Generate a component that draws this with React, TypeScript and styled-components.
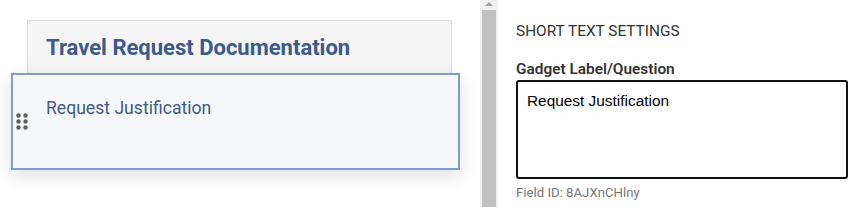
import React, { FC } from "react";
import styled, { createGlobalStyle } from "styled-components";

const GlobalStyle = createGlobalStyle`
  html, body {
    margin: 0;
    padding: 0;
    background: #ffffff;
    font-family: Roboto, "Liberation Sans", sans-serif;
  }
`;

const DragHandle: FC = () => (
  <HandleSvg width="12" height="18" viewBox="0 0 12 18">
    {[0, 1, 2].map((row) =>
      [0, 1].map((col) => (
        <circle key={`${row}-${col}`} cx={2.5 + col * 7} cy={2.5 + row * 6} r={2.2} fill="#5f5f5f" />
      ))
    )}
  </HandleSvg>
);

const App: FC = () => {
  return (
    <>
      <GlobalStyle />
      <Root>
        <Canvas>
          <SectionCard>
            <SectionTitle>Travel Request Documentation</SectionTitle>
          </SectionCard>
          <DraggedGadget>
            <DragHandle />
            <GadgetLabel>Request Justification</GadgetLabel>
          </DraggedGadget>
        </Canvas>
        <Scrollbar>
          <ScrollArrow />
          <ScrollThumb />
        </Scrollbar>
        <Settings>
          <SettingsHeading>SHORT TEXT SETTINGS</SettingsHeading>
          <FieldLabel>Gadget Label/Question</FieldLabel>
          <LabelInput defaultValue="Request Justification" />
          <FieldId>Field ID: 8AJXnCHlny</FieldId>
        </Settings>
      </Root>
    </>
  );
};

export default App;

const Root = styled.div`
  display: flex;
  width: 858px;
  height: 207px;
  overflow: hidden;
`;
const Canvas = styled.div`
  position: relative;
  width: 480px;
  flex-shrink: 0;
  padding: 20px 28px 0 27px;
  box-sizing: border-box;
`;
const SectionCard = styled.div`
  height: 53px;
  box-sizing: border-box;
  border: 1px solid #dcdcdc;
  border-bottom: none;
  background: #f5f5f5;
  padding: 14px 0 0 18px;
`;
const SectionTitle = styled.h2`
  margin: 0;
  font-size: 22px;
  line-height: 26px;
  font-weight: 700;
  color: #3c5a8c;
`;
const DraggedGadget = styled.div`
  position: absolute;
  left: 11px;
  top: 73px;
  width: 449px;
  height: 97px;
  box-sizing: border-box;
  border: 2px solid #7f9dcb;
  background: #f5f7fa;
  box-shadow: 0 6px 18px rgba(0, 0, 0, 0.12);
  padding: 22px 0 0 33px;
`;
const HandleSvg = styled.svg`
  position: absolute;
  left: 3px;
  top: 38px;
`;
const GadgetLabel = styled.div`
  font-size: 17.6px;
  line-height: 22px;
  color: #3f5b88;
`;
const Scrollbar = styled.div`
  position: relative;
  width: 18px;
  flex-shrink: 0;
  background: #f1f1f1;
  display: flex;
  flex-direction: column;
  align-items: center;
`;
const ScrollArrow = styled.div`
  width: 0;
  height: 0;
  margin-top: 2px;
  border-left: 4px solid transparent;
  border-right: 4px solid transparent;
  border-bottom: 4px solid #a3a3a3;
`;
const ScrollThumb = styled.div`
  margin-top: 4px;
  width: 14px;
  flex: 1;
  background: #c1c1c1;
`;
const Settings = styled.div`
  flex: 1;
  padding: 22px 12px 0 18px;
  box-sizing: border-box;
  display: flex;
  flex-direction: column;
`;
const SettingsHeading = styled.div`
  font-size: 15.4px;
  line-height: 19px;
  color: #333333;
`;
const FieldLabel = styled.div`
  margin-top: 19px;
  font-size: 15.4px;
  line-height: 19px;
  font-weight: 600;
  color: #333333;
`;
const LabelInput = styled.textarea`
  margin-top: 1px;
  width: 332px;
  height: 99px;
  box-sizing: border-box;
  border: 2px solid #111111;
  border-radius: 3px;
  padding: 9px 9px;
  font-family: "Liberation Sans", Arial, sans-serif;
  font-size: 15.4px;
  line-height: 19px;
  color: #000000;
  resize: none;
  outline: none;
`;
const FieldId = styled.div`
  margin-top: 6px;
  font-size: 13.2px;
  line-height: 16px;
  color: #777777;
`;
